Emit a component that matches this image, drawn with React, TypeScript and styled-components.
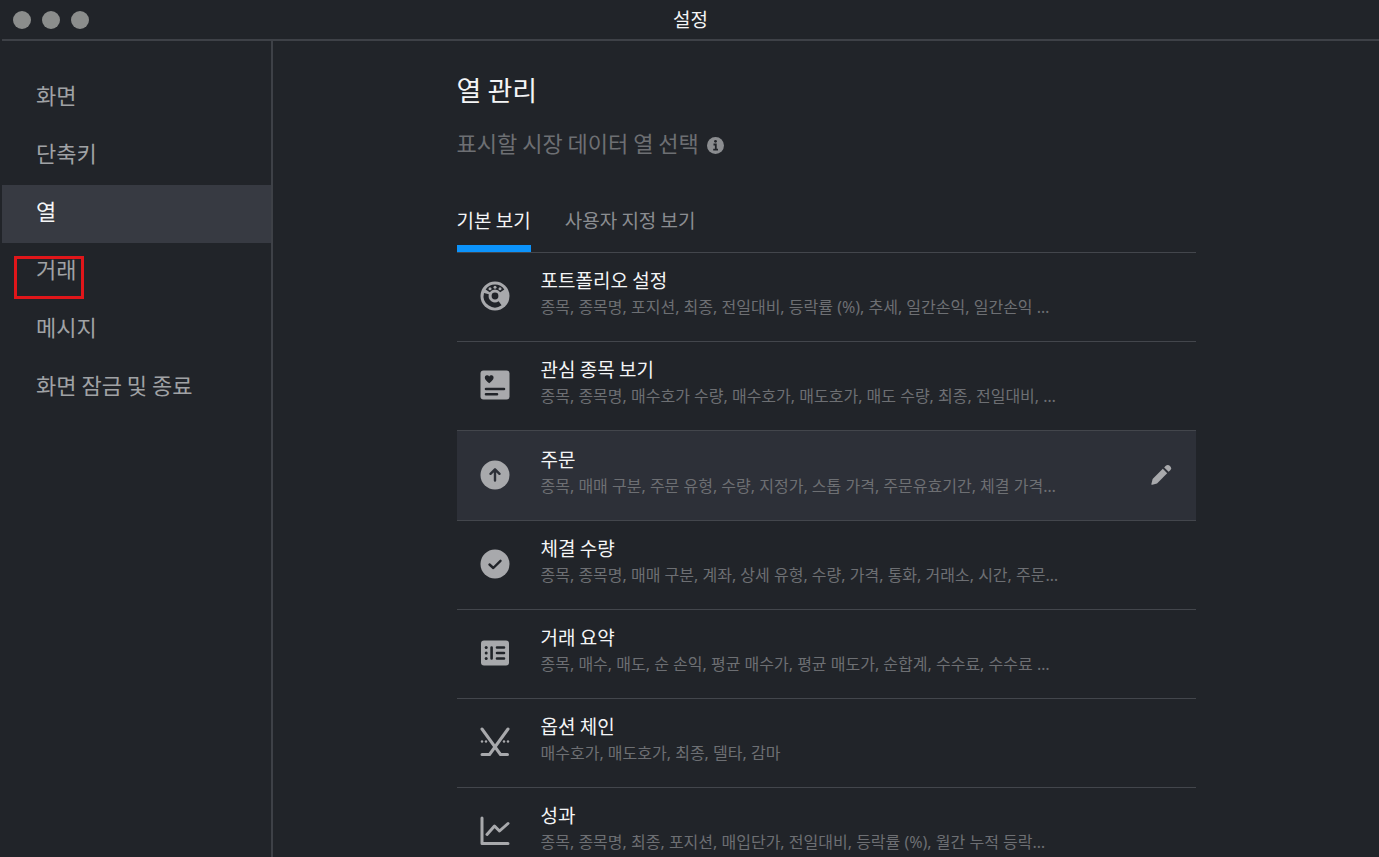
import React from "react";
import styled, { createGlobalStyle } from "styled-components";

const color = {
  bg: "#212429",
  line: "#3e4147",
  rowLine: "#43464c",
  selected: "#373a42",
  hover: "#2d3038",
  text: "#f4f5f6",
  nav: "#a0a2a5",
  muted: "#6d6f73",
  tab: "#8b8d91",
  icon: "#a8a9ac",
  accent: "#0c93fb",
  mark: "#e0161a",
};

const GlobalStyle = createGlobalStyle`
  *, *::before, *::after { box-sizing: border-box; }
  body {
    margin: 0;
    background: ${color.bg};
    color: ${color.text};
    font-family: "Noto Sans CJK KR", "Noto Sans", sans-serif;
  }
  button { font: inherit; border: 0; background: none; padding: 0; cursor: pointer; }
`;

const Window = styled.div`
  display: flex;
  flex-direction: column;
  height: 100vh;
  padding-left: 2px;
  overflow: hidden;
`;

const TitleBar = styled.header`
  flex: none;
  display: grid;
  grid-template-columns: 1fr auto 1fr;
  align-items: center;
  height: 41px;
  padding-bottom: 2px;
  border-bottom: 2px solid ${color.line};
`;

const WindowButtons = styled.div`
  display: flex;
  gap: 11px;
  padding: 2px 0 0 11px;
`;

const WindowButton = styled.button`
  width: 18px;
  height: 18px;
  border-radius: 50%;
  background: #8b8d8c;
`;

const WindowTitle = styled.div`
  font-size: 19px;
  line-height: 28px;
`;

const Body = styled.div`
  flex: 1;
  display: flex;
  min-height: 0;
`;

const Sidebar = styled.nav`
  flex: none;
  width: 271px;
  padding-top: 28px;
  border-right: 2px solid ${color.line};
`;

const NavItem = styled.button<{ $selected?: boolean }>`
  position: relative;
  display: block;
  width: 100%;
  height: 58px;
  padding: 0 34px 8px;
  text-align: left;
  font-size: 22px;
  line-height: 32px;
  color: ${(p) => (p.$selected ? color.text : color.nav)};
  background: ${(p) => (p.$selected ? color.selected : "transparent")};
`;

const Mark = styled.span`
  position: absolute;
  top: 13px;
  left: 12px;
  width: 70px;
  height: 43px;
  border: 3px solid ${color.mark};
`;

const Main = styled.main`
  flex: 1;
  min-width: 0;
  padding: 29px 24px 0;
  overflow-y: auto;
  scrollbar-width: none;
`;

const Content = styled.div`
  width: 100%;
  max-width: 739px;
  margin: 0 auto;
`;

const Heading = styled.h1`
  margin: 0;
  font-size: 27px;
  font-weight: 400;
  line-height: 40px;
`;

const Intro = styled.p`
  display: flex;
  align-items: center;
  gap: 8px;
  margin: 16px 0 0;
  font-size: 22px;
  line-height: 32px;
  color: ${color.muted};
`;

const InfoButton = styled.button`
  display: flex;
  padding-top: 6px;
  color: #8b8d90;
`;

const Tabs = styled.div`
  display: flex;
  gap: 34px;
  margin-top: 46px;
  border-bottom: 1px solid ${color.rowLine};
`;

const Tab = styled.button<{ $active?: boolean }>`
  height: 48px;
  padding-bottom: 9px;
  font-size: 19px;
  line-height: 28px;
  color: ${(p) => (p.$active ? color.text : color.tab)};
  border-bottom: 7px solid ${(p) => (p.$active ? color.accent : "transparent")};
`;

const List = styled.ul`
  margin: 0;
  padding: 0;
  list-style: none;
`;

const Row = styled.li<{ $hovered?: boolean }>`
  display: flex;
  align-items: center;
  height: ${(p) => (p.$hovered ? 90 : 89)}px;
  padding: 0 24px 2px 22px;
  border-bottom: 1px solid ${color.rowLine};
  background: ${(p) => (p.$hovered ? color.hover : "transparent")};
`;

const RowIcon = styled.svg`
  flex: none;
  width: 32px;
  height: 32px;
  color: ${color.icon};
`;

const RowText = styled.div`
  flex: 1;
  min-width: 0;
  margin-left: 30px;
  padding-bottom: 6px;
`;

const RowTitle = styled.div`
  font-size: 19px;
  line-height: 28px;
`;

const RowColumns = styled.div`
  overflow: hidden;
  white-space: nowrap;
  text-overflow: ellipsis;
  font-family: "Noto Sans", "Noto Sans CJK KR", sans-serif;
  font-size: 16px;
  line-height: 26px;
  color: ${color.muted};
`;

const EditButton = styled.button`
  display: flex;
  color: ${color.icon};
`;

const icons: Record<string, React.ReactNode> = {
  portfolio: (
    <>
      <circle cx="16" cy="16" r="14.5" fill="currentColor" />
      <path
        d="M8.7 10.9A8.9 8.9 0 0 1 23.3 10.9M21.1 23.3A8.9 8.9 0 0 1 7.4 13.7"
        fill="none"
        stroke={color.bg}
        strokeWidth="5"
      />
      <circle cx="16" cy="16" r="3.4" fill={color.bg} />
      <circle cx="11" cy="8.8" r="1.5" fill="currentColor" />
      <circle cx="16" cy="7.2" r="1.5" fill="currentColor" />
      <circle cx="21" cy="8.8" r="1.5" fill="currentColor" />
    </>
  ),
  watchlist: (
    <>
      <rect x="1.5" y="1.5" width="29" height="29" rx="3" fill="currentColor" />
      <path
        d="M10.2 14.2C7.5 12.2 5.8 10.6 5.8 8.6A2.3 2.3 0 0 1 10.2 7.6A2.3 2.3 0 0 1 14.6 8.6C14.6 10.6 12.9 12.2 10.2 14.2Z"
        fill={color.bg}
      />
      <path d="M7 20H25M7 25.3H18" stroke={color.bg} strokeWidth="2.6" strokeLinecap="round" />
    </>
  ),
  orders: (
    <>
      <circle cx="16" cy="16" r="14.5" fill="currentColor" />
      <path
        d="M16 21.5V10.5M11.5 14.8 16 10.3 20.5 14.8"
        fill="none"
        stroke={color.hover}
        strokeWidth="2.4"
        strokeLinecap="round"
        strokeLinejoin="round"
      />
    </>
  ),
  fills: (
    <>
      <circle cx="16" cy="16" r="14.5" fill="currentColor" />
      <path
        d="M10.5 16.5 14.3 20 21.5 12.8"
        fill="none"
        stroke={color.bg}
        strokeWidth="2.4"
        strokeLinecap="round"
        strokeLinejoin="round"
      />
    </>
  ),
  summary: (
    <>
      <rect x="2" y="3.5" width="28" height="25" rx="3" fill="currentColor" />
      <path
        d="M12.6 10.5V21.5M18 10.5H25M18 16H25M18 21.5H25"
        stroke={color.bg}
        strokeWidth="2.6"
        strokeLinecap="round"
      />
      <circle cx="7.2" cy="10.5" r="1.5" fill={color.bg} />
      <circle cx="7.2" cy="16" r="1.5" fill={color.bg} />
      <circle cx="7.2" cy="21.5" r="1.5" fill={color.bg} />
    </>
  ),
  options: (
    <>
      <path
        d="M3 3 21.5 28.5H28.5M29 3 10.5 28.5H3"
        fill="none"
        stroke="currentColor"
        strokeWidth="3"
        strokeLinecap="round"
        strokeLinejoin="round"
      />
      <circle cx="3" cy="15.5" r="1.2" fill="currentColor" />
      <circle cx="7" cy="15.5" r="1.2" fill="currentColor" />
      <circle cx="25" cy="15.5" r="1.2" fill="currentColor" />
      <circle cx="29" cy="15.5" r="1.2" fill="currentColor" />
    </>
  ),
  performance: (
    <path
      d="M3 3V28.5H29M8 19.5 15.5 11 20.5 16 29 8.5"
      fill="none"
      stroke="currentColor"
      strokeWidth="3"
      strokeLinecap="round"
      strokeLinejoin="round"
    />
  ),
};

const navItems = [
  { label: "화면" },
  { label: "단축키" },
  { label: "열", selected: true },
  { label: "거래", marked: true },
  { label: "메시지" },
  { label: "화면 잠금 및 종료" },
];

const views = [
  { icon: "portfolio", title: "포트폴리오 설정", columns: "종목, 종목명, 포지션, 최종, 전일대비, 등락률 (%), 추세, 일간손익, 일간손익 …" },
  { icon: "watchlist", title: "관심 종목 보기", columns: "종목, 종목명, 매수호가 수량, 매수호가, 매도호가, 매도 수량, 최종, 전일대비, …" },
  { icon: "orders", title: "주문", columns: "종목, 매매 구분, 주문 유형, 수량, 지정가, 스톱 가격, 주문유효기간, 체결 가격…", hovered: true },
  { icon: "fills", title: "체결 수량", columns: "종목, 종목명, 매매 구분, 계좌, 상세 유형, 수량, 가격, 통화, 거래소, 시간, 주문…" },
  { icon: "summary", title: "거래 요약", columns: "종목, 매수, 매도, 순 손익, 평균 매수가, 평균 매도가, 순합계, 수수료, 수수료 …" },
  { icon: "options", title: "옵션 체인", columns: "매수호가, 매도호가, 최종, 델타, 감마" },
  { icon: "performance", title: "성과", columns: "종목, 종목명, 최종, 포지션, 매입단가, 전일대비, 등락률 (%), 월간 누적 등락…" },
];

export default function App() {
  return (
    <>
      <GlobalStyle />
      <Window>
        <TitleBar>
          <WindowButtons>
            <WindowButton aria-label="닫기" />
            <WindowButton aria-label="최소화" />
            <WindowButton aria-label="최대화" />
          </WindowButtons>
          <WindowTitle>설정</WindowTitle>
        </TitleBar>
        <Body>
          <Sidebar>
            {navItems.map((item) => (
              <NavItem key={item.label} $selected={item.selected}>
                {item.label}
                {item.marked && <Mark />}
              </NavItem>
            ))}
          </Sidebar>
          <Main>
            <Content>
              <Heading>열 관리</Heading>
              <Intro>
                표시할 시장 데이터 열 선택
                <InfoButton aria-label="정보">
                  <svg width="17" height="17" viewBox="0 0 17 17">
                    <circle cx="8.5" cy="8.5" r="8.5" fill="currentColor" />
                    <circle cx="8.5" cy="4.3" r="1.4" fill={color.bg} />
                    <path d="M6.5 7.5H8.8V12.5M6.2 12.7H11" fill="none" stroke={color.bg} strokeWidth="1.8" />
                  </svg>
                </InfoButton>
              </Intro>
              <Tabs role="tablist">
                <Tab role="tab" aria-selected $active>
                  기본 보기
                </Tab>
                <Tab role="tab" aria-selected={false}>
                  사용자 지정 보기
                </Tab>
              </Tabs>
              <List>
                {views.map((view) => (
                  <Row key={view.title} $hovered={view.hovered}>
                    <RowIcon viewBox="0 0 32 32" aria-hidden>
                      {icons[view.icon]}
                    </RowIcon>
                    <RowText>
                      <RowTitle>{view.title}</RowTitle>
                      <RowColumns>{view.columns}</RowColumns>
                    </RowText>
                    {view.hovered && (
                      <EditButton aria-label="편집">
                        <svg width="22" height="22" viewBox="0 0 22 22" fill="currentColor">
                          <path d="M12.8 4.8 17.2 9.2 7 19.4 2.3 20.8Q1.2 21 1.4 19.9L2.6 15z" />
                          <path d="M14.2 3.4 15.5 2A3.1 3.1 0 0 1 20 6.5L18.6 7.8z" />
                        </svg>
                      </EditButton>
                    )}
                  </Row>
                ))}
              </List>
            </Content>
          </Main>
        </Body>
      </Window>
    </>
  );
}
